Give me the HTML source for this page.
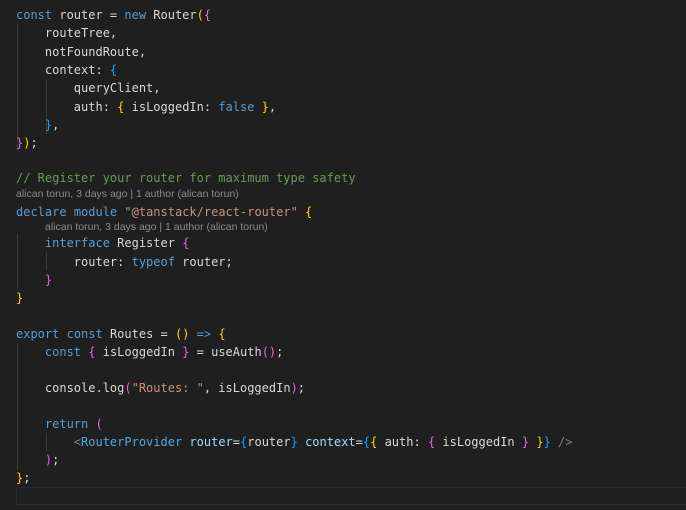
<!DOCTYPE html>
<html><head><meta charset="utf-8"><style>
body{margin:0;width:686px;height:510px;background:#1f1f1f;overflow:hidden;position:relative;font-family:"DejaVu Sans Mono","Liberation Mono",monospace;font-size:12px;color:#d8d8d8}
.l{position:absolute;left:16px;height:18px;line-height:18px;white-space:pre}
.a{position:absolute;height:14px;line-height:14px;font-family:"Liberation Sans",sans-serif;font-size:10.5px;color:#8b8b8b;white-space:pre}
.k{color:#569cd6}.s{color:#ce9178}.c{color:#6a9955}.y{color:#ffd700}.p{color:#da70d6}.b{color:#179fff}.v{color:#9cdcfe}.g{color:#808080}.t{color:#4fa9e0}
.gd{position:absolute;width:1px;background:#3a3a3a}
</style></head><body>
<div class="gd" style="left:17px;top:24px;height:128px"></div>
<div class="gd" style="left:46px;top:79px;height:55px"></div>
<div class="gd" style="left:17px;top:234px;height:55px"></div>
<div class="gd" style="left:46px;top:252px;height:18px"></div>
<div class="gd" style="left:17px;top:343px;height:127px"></div>
<div class="gd" style="left:46px;top:433px;height:18px"></div>
<div style="position:absolute;left:16px;top:487px;width:680px;height:18px;border:1px solid #2b2b2b;box-sizing:border-box"></div>

<div class="l" style="top:6px"><span class="k">const</span> router = <span class="k">new</span> Router<span class="y">(</span><span class="p">{</span></div>
<div class="l" style="top:24px">    routeTree,</div>
<div class="l" style="top:43px">    notFoundRoute,</div>
<div class="l" style="top:61px">    context: <span class="b">{</span></div>
<div class="l" style="top:79px">        queryClient,</div>
<div class="l" style="top:98px">        auth: <span class="y">{</span> isLoggedIn: <span class="k">false</span> <span class="y">}</span>,</div>
<div class="l" style="top:116px">    <span class="b">}</span>,</div>
<div class="l" style="top:134px"><span class="p">}</span><span class="y">)</span>;</div>
<div class="l c" style="top:169px">// Register your router for maximum type safety</div>
<div class="a" style="left:16px;top:187px">alican torun, 3 days ago | 1 author (alican torun)</div>
<div class="l" style="top:203px"><span class="k">declare</span> <span class="k">module</span> <span class="s">"@tanstack/react-router"</span> <span class="y">{</span></div>
<div class="a" style="left:45px;top:220px">alican torun, 3 days ago | 1 author (alican torun)</div>
<div class="l" style="top:234px">    <span class="k">interface</span> Register <span class="p">{</span></div>
<div class="l" style="top:253px">        router: <span class="k">typeof</span> router;</div>
<div class="l" style="top:271px">    <span class="p">}</span></div>
<div class="l" style="top:289px"><span class="y">}</span></div>
<div class="l" style="top:325px"><span class="k">export</span> <span class="k">const</span> Routes = <span class="y">()</span> <span class="k">=&gt;</span> <span class="y">{</span></div>
<div class="l" style="top:343px">    <span class="k">const</span> <span class="p">{</span> isLoggedIn <span class="p">}</span> = useAuth<span class="p">()</span>;</div>
<div class="l" style="top:379px">    console.log<span class="p">(</span><span class="s">"Routes: "</span>, isLoggedIn<span class="p">)</span>;</div>
<div class="l" style="top:415px">    <span class="k">return</span> <span class="p">(</span></div>
<div class="l" style="top:433px">        <span class="g">&lt;</span><span class="t">RouterProvider</span> <span class="v">router</span>=<span class="b">{</span>router<span class="b">}</span> <span class="v">context</span>=<span class="b">{</span><span class="y">{</span> auth: <span class="p">{</span> isLoggedIn <span class="p">}</span> <span class="y">}</span><span class="b">}</span> <span class="g">/&gt;</span></div>
<div class="l" style="top:451px">    <span class="p">)</span>;</div>
<div class="l" style="top:469px"><span class="y">}</span>;</div>
</body></html>
